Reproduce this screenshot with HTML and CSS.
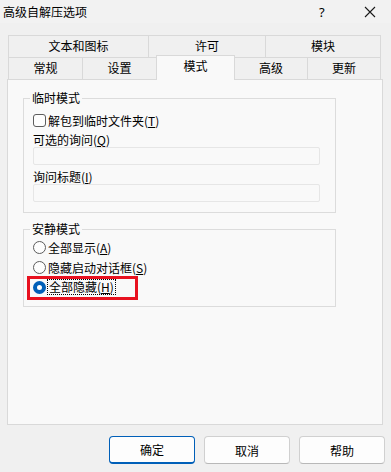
FILE: index.html
```html
<!DOCTYPE html>
<html lang="zh-CN">

<head>
    <meta charset="UTF-8">
    <meta name="viewport" content="width=device-width, initial-scale=1.0">
    <title>高级自解压选项</title>
    <link rel="stylesheet" href="styles.css">
</head>

<body>
    <div class="titlebar">
        <span class="title">高级自解压选项</span>
        <span class="help">?</span>
        <span class="close">
            <svg width="12" height="12" viewBox="0 0 12 12">
                <path d="M1 1 L11 11 M11 1 L1 11" stroke="#1a1a1a" stroke-width="1.1" fill="none" />
            </svg>
        </span>
    </div>

    <div class="tabs">
        <div class="tab_row">
            <div class="tab tab_text">文本和图标</div>
            <div class="tab tab_license">许可</div>
            <div class="tab tab_module last">模块</div>
        </div>
        <div class="tab_row">
            <div class="tab tab_general">常规</div>
            <div class="tab tab_setup">设置</div>
            <div class="tab tab_mode selected">模式</div>
            <div class="tab tab_advanced">高级</div>
            <div class="tab tab_update last">更新</div>
        </div>
    </div>

    <div class="panel">
        <fieldset class="group group_temp">
            <legend>临时模式</legend>
            <div class="check_row">
                <span class="checkbox"></span>
                <span>解包到临时文件夹(<u>T</u>)</span>
            </div>
            <div class="field_label first">可选的询问(<u>Q</u>)</div>
            <div class="text_field"></div>
            <div class="field_label">询问标题(<u>I</u>)</div>
            <div class="text_field"></div>
        </fieldset>

        <fieldset class="group group_silent">
            <legend>安静模式</legend>
            <div class="radio_row">
                <span class="radio"></span>
                <span>全部显示(<u>A</u>)</span>
            </div>
            <div class="radio_row">
                <span class="radio"></span>
                <span>隐藏启动对话框(<u>S</u>)</span>
            </div>
            <div class="radio_row marked">
                <span class="radio checked"></span>
                <span class="focus">全部隐藏(<u>H</u>)</span>
            </div>
        </fieldset>
    </div>

    <div class="buttons">
        <button class="btn default">确定</button>
        <button class="btn">取消</button>
        <button class="btn">帮助</button>
    </div>
</body>

</html>
```

FILE: styles.css
```css
body {
    margin: 0;
    padding: 0;
    width: 391px;
    height: 472px;
    overflow: hidden;
    background-color: #f0f0f0;
    font-family: "Noto Sans CJK SC", "Noto Sans", sans-serif;
    font-size: 12px;
    color: #000;
}

u {
    text-decoration: underline;
    text-underline-offset: 1px;
}

/* title bar */
.titlebar {
    height: 23px;
    display: flex;
    align-items: center;
    padding-left: 3px;
    background-color: #f2f2f2;
}

.title {
    flex: 1;
    line-height: 14px;
}

.help {
    width: 10px;
    margin-right: 35px;
    font-family: "Noto Sans", sans-serif;
    font-size: 13px;
    line-height: 14px;
}

.close {
    display: flex;
    margin-right: 15px;
}

/* tabs */
.tabs {
    margin-top: 12px;
    margin-left: 8px;
    width: 373px;
}

.tab_row {
    display: flex;
    height: 22px;
}

.tab {
    box-sizing: border-box;
    height: 22px;
    border-top: 1px solid #d9d9d9;
    border-left: 1px solid #d9d9d9;
    text-align: center;
    line-height: 20px;
    background-color: #f0f0f0;
}

.tab.last {
    border-right: 1px solid #d9d9d9;
}

.tab_text { width: 140px; }
.tab_license { width: 117px; }
.tab_module { width: 116px; }
.tab_general { width: 74px; }
.tab_setup { width: 74px; }
.tab_mode { width: 79px; }
.tab_advanced { width: 73px; margin-left: -1px; }
.tab_update { width: 74px; }

.tab.selected {
    position: relative;
    z-index: 1;
    height: 25px;
    margin-top: -2px;
    border-right: 1px solid #d9d9d9;
    background-color: #f9f9f9;
    line-height: 20px;
}

/* page */
.panel {
    box-sizing: border-box;
    margin-left: 7px;
    width: 376px;
    height: 346px;
    border: 1px solid #d9d9d9;
    background-color: #f9f9f9;
    padding: 11px 0 0 15px;
}

.group {
    box-sizing: border-box;
    width: 313px;
    margin: 0;
    padding: 0 0 0 9px;
    border: 1px solid #dcdcdc;
}

.group legend {
    padding: 0 2px;
    margin-left: -3px;
    line-height: 14px;
}

.group_temp {
    height: 122px;
}

.group_silent {
    margin-top: 9px;
    height: 85px;
}

.check_row,
.radio_row {
    display: flex;
    align-items: center;
    gap: 2px;
    height: 20px;
}

.check_row {
    margin-top: 5px;
}

.checkbox {
    box-sizing: border-box;
    width: 13px;
    height: 13px;
    border: 1px solid #5c5c5c;
    border-radius: 3px;
    background-color: #fdfdfd;
}

.field_label {
    line-height: 12px;
    margin-top: 6px;
}

.field_label.first {
    margin-top: 4px;
}

.text_field {
    box-sizing: border-box;
    width: 287px;
    height: 18px;
    margin-top: 1px;
    border: 1px solid #e6e6e6;
    border-radius: 2px;
    background-color: #f9f9f9;
}

.radio_row:first-of-type {
    margin-top: 1px;
}

.radio {
    box-sizing: border-box;
    width: 13px;
    height: 13px;
    border: 1px solid #5c5c5c;
    border-radius: 50%;
    background-color: #fdfdfd;
}

.radio.checked {
    border: 4px solid #005fb8;
    background-color: #fff;
}

.focus {
    outline: 1px dotted #000;
    line-height: 14px;
    padding: 0 1px;
}

/* red annotation frame round the last option */
.marked {
    position: relative;
}

.marked::after {
    content: "";
    position: absolute;
    left: -6px;
    top: -1px;
    width: 111px;
    height: 24px;
    box-sizing: border-box;
    border: 3px solid #e8111f;
}

/* dialog buttons */
.buttons {
    display: flex;
    justify-content: flex-end;
    gap: 9px;
    margin-top: 11px;
    padding-right: 6px;
}

.btn {
    box-sizing: border-box;
    width: 86px;
    height: 28px;
    border: 1px solid #d0d0d0;
    border-bottom-color: #b8b8b8;
    border-radius: 4px;
    background-color: #fdfdfd;
    font-family: inherit;
    font-size: 12px;
    color: #000;
    padding: 0;
}

.btn.default {
    border: 1px solid #005fb8;
    border-bottom-width: 2px;
}
```
